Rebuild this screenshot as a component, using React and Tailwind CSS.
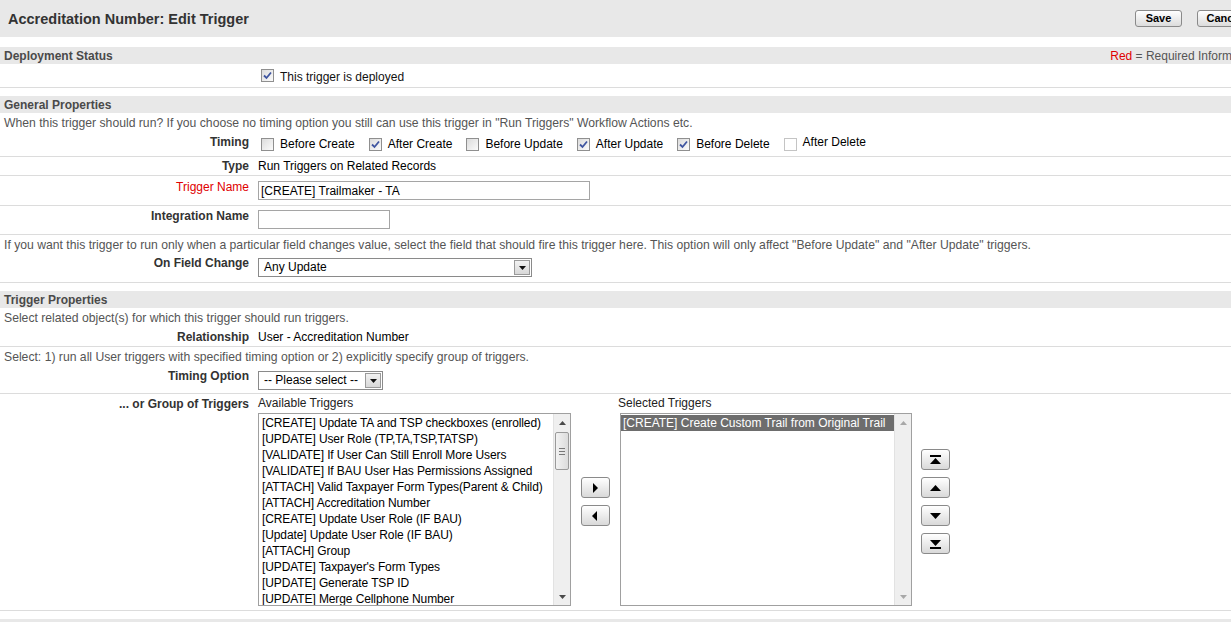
const available = [
  '[CREATE] Update TA and TSP checkboxes (enrolled)',
  '[UPDATE] User Role (TP,TA,TSP,TATSP)',
  '[VALIDATE] If User Can Still Enroll More Users',
  '[VALIDATE] If BAU User Has Permissions Assigned',
  '[ATTACH] Valid Taxpayer Form Types(Parent & Child)',
  '[ATTACH] Accreditation Number',
  '[CREATE] Update User Role (IF BAU)',
  '[Update] Update User Role (IF BAU)',
  '[ATTACH] Group',
  "[UPDATE] Taxpayer's Form Types",
  '[UPDATE] Generate TSP ID',
  '[UPDATE] Merge Cellphone Number',
]

const timings = [
  { label: 'Before Create', checked: false },
  { label: 'After Create', checked: true },
  { label: 'Before Update', checked: false },
  { label: 'After Update', checked: true },
  { label: 'Before Delete', checked: true },
  { label: 'After Delete', checked: false, light: true },
]

function Checkbox({ checked, light }) {
  return (
    <span
      className={`inline-flex h-[13px] w-[13px] shrink-0 items-center justify-center border ${
        light ? 'border-[#c4c4c4] bg-white' : 'border-[#8f8f8f] bg-gradient-to-br from-[#dcdcdc] to-[#fbfbfb]'
      }`}
    >
      {checked ? (
        <svg width="9" height="9" viewBox="0 0 9 9">
          <path d="M1 4.5 L3.5 7 L8 1.5" fill="none" stroke="#3f55a0" strokeWidth="1.8" />
        </svg>
      ) : null}
    </span>
  )
}

function SectionHeader({ children, right }) {
  return (
    <div className="flex h-[17px] items-center justify-between bg-[#e8e8e8] px-1 text-[12px]">
      <span className="font-bold text-[#4a4a4a]">{children}</span>
      {right}
    </div>
  )
}

function Label({ children, red, pt = 'pt-0' }) {
  return (
    <div
      className={`w-[258px] shrink-0 pr-[9px] text-right font-bold ${pt} ${red ? 'font-normal text-[#e00000]' : 'text-[#333]'}`}
    >
      {children}
    </div>
  )
}

function Row({ children, className = '', line = true }) {
  return (
    <div className={`flex ${line ? 'border-b border-[#dcdcdc]' : ''} ${className}`}>{children}</div>
  )
}

function Desc({ children, className = '' }) {
  return <div className={`whitespace-nowrap pl-1 text-[12.2px] text-[#555] ${className}`}>{children}</div>
}

function SelectBox({ value, width }) {
  return (
    <div className={`flex h-[19px] items-stretch border border-[#8a8a8a] bg-white ${width}`}>
      <span className="flex-1 truncate pl-[5px] leading-[17px] text-black">{value}</span>
      <span className="m-px flex w-[16px] items-center justify-center border border-[#9a9a9a] bg-gradient-to-b from-[#f2f2f2] to-[#d8d8d8]">
        <svg width="7" height="4" viewBox="0 0 7 4">
          <path d="M0 0 H7 L3.5 4 Z" fill="#111" />
        </svg>
      </span>
    </div>
  )
}

function ArrowBtn({ dir }) {
  const shapes = {
    right: <path d="M4 1 L9 6 L4 11 Z" fill="#000" />,
    left: <path d="M8 1 L3 6 L8 11 Z" fill="#000" />,
    top: (
      <>
        <rect x="1" y="1" width="11" height="2" fill="#000" />
        <path d="M1 10 L6.5 4 L12 10 Z" fill="#000" />
      </>
    ),
    up: <path d="M1 9 L6.5 3 L12 9 Z" fill="#000" />,
    down: <path d="M1 3 L6.5 9 L12 3 Z" fill="#000" />,
    bottom: (
      <>
        <path d="M1 2 L6.5 8 L12 2 Z" fill="#000" />
        <rect x="1" y="9" width="11" height="2" fill="#000" />
      </>
    ),
  }
  return (
    <button className="flex h-[21px] w-[29px] items-center justify-center rounded-[3px] border border-[#8a8a8a] bg-gradient-to-b from-white to-[#d9d9d9]">
      <svg width="13" height="12" viewBox="0 0 13 12">
        {shapes[dir]}
      </svg>
    </button>
  )
}

function Scrollbar({ active }) {
  const c = active ? '#4a4a4a' : '#a8a8a8'
  return (
    <div className="flex w-[17px] shrink-0 flex-col border-l border-[#e2e2e2] bg-[#efefef]">
      <div className="flex h-[17px] items-center justify-center">
        <svg width="7" height="4" viewBox="0 0 7 4">
          <path d="M0 4 L3.5 0 L7 4 Z" fill={c} />
        </svg>
      </div>
      <div className="flex-1 px-px">
        {active ? (
          <div className="mt-px flex h-[38px] flex-col items-center justify-center gap-[2px] rounded-[2px] border border-[#9a9a9a] bg-gradient-to-r from-[#f2f2f2] to-[#dcdcdc]">
            <span className="h-px w-[6px] bg-[#777]" />
            <span className="h-px w-[6px] bg-[#777]" />
            <span className="h-px w-[6px] bg-[#777]" />
          </div>
        ) : null}
      </div>
      <div className="flex h-[17px] items-center justify-center">
        <svg width="7" height="4" viewBox="0 0 7 4">
          <path d="M0 0 H7 L3.5 4 Z" fill={c} />
        </svg>
      </div>
    </div>
  )
}

export default function App() {
  return (
    <div className="h-[622px] w-[1231px] overflow-hidden bg-white font-['Liberation_Sans',Arial,sans-serif] text-[12px] leading-[14px] text-black">
      <div className="w-[1262px]">
        <header className="flex h-[37px] items-center justify-between bg-[#e8e8e8] pl-2 pr-[10px]">
          <h1 className="text-[14.5px] font-bold text-[#333]">Accreditation Number: Edit Trigger</h1>
          <div className="flex items-center gap-[15px] pb-px">
            <button className="h-[17px] w-[47px] rounded-[3px] border border-[#8a8a8a] bg-gradient-to-b from-white to-[#dcdcdc] text-[11px] font-bold leading-[15px] text-black">
              Save
            </button>
            <button className="h-[17px] w-[55px] rounded-[3px] border border-[#8a8a8a] bg-gradient-to-b from-white to-[#dcdcdc] text-[11px] font-bold leading-[15px] text-black">
              Cancel
            </button>
          </div>
        </header>

        <div className="mt-[10px]">
          <SectionHeader
            right={
              <span className="text-[#555]">
                <span className="text-[#e00000]">Red</span> = Required Information
              </span>
            }
          >
            Deployment Status
          </SectionHeader>
          <Row className="h-[24px] items-center">
            <div className="w-[261px] shrink-0" />
            <Checkbox checked />
            <span className="ml-[6px] mt-[3px] text-[#111]">This trigger is deployed</span>
          </Row>
        </div>

        <div className="mt-[8px]">
          <SectionHeader>General Properties</SectionHeader>
          <Desc className="h-[20px] pt-[3px]">
            When this trigger should run? If you choose no timing option you still can use this trigger in "Run Triggers" Workflow Actions etc.
          </Desc>
          <Row className="h-[24px] items-start pt-[2px]">
            <Label>Timing</Label>
            <div className="flex items-center pl-[3px] pt-[2px]">
              {timings.map((t) => (
                <div key={t.label} className="mr-[14px] flex items-center">
                  <Checkbox checked={t.checked} light={t.light} />
                  <span className={`ml-[6px] ${t.light ? '-mt-[4px]' : ''}`}>{t.label}</span>
                </div>
              ))}
            </div>
          </Row>
          <Row className="h-[19px] items-center">
            <Label>Type</Label>
            <span>Run Triggers on Related Records</span>
          </Row>
          <Row className="h-[30px] items-start">
            <Label red pt="pt-[4px]">Trigger Name</Label>
            <div className="mt-[5px] flex h-[19px] w-[332px] items-center border border-[#a5a5a5] pl-[2px]">
              [CREATE] Trailmaker - TA
            </div>
          </Row>
          <Row className="h-[29px] items-start">
            <Label pt="pt-[3px]">Integration Name</Label>
            <div className="mt-[4px] h-[19px] w-[132px] border border-[#a5a5a5]" />
          </Row>
          <Desc className="h-[19px] pt-[3px]">
            If you want this trigger to run only when a particular field changes value, select the field that should fire this trigger here. This option will only affect "Before Update" and "After Update" triggers.
          </Desc>
          <Row className="h-[29px] items-start">
            <Label pt="pt-[2px]">On Field Change</Label>
            <div className="mt-[4px]">
              <SelectBox value="Any Update" width="w-[274px]" />
            </div>
          </Row>
        </div>

        <div className="mt-[8px]">
          <SectionHeader>Trigger Properties</SectionHeader>
          <Desc className="h-[20px] pt-[3px]">Select related object(s) for which this trigger should run triggers.</Desc>
          <Row className="h-[19px] items-start pt-[2px]">
            <Label>Relationship</Label>
            <span>User - Accreditation Number</span>
          </Row>
          <Desc className="h-[20px] pt-[3px]">
            Select: 1) run all User triggers with specified timing option or 2) explicitly specify group of triggers.
          </Desc>
          <Row className="h-[27px] items-start">
            <Label pt="pt-[2px]">Timing Option</Label>
            <div className="mt-[4px]">
              <SelectBox value="-- Please select --" width="w-[125px]" />
            </div>
          </Row>
          <Row className="h-[217px] items-start pt-px">
            <Label pt="pt-[2px]">... or Group of Triggers</Label>
            <div className="flex flex-col">
              <span className="pt-[1px] text-[#222]">Available Triggers</span>
              <div className="mt-[3px] flex h-[193px] w-[313px] border border-[#a0a0a0]">
                <ul className="flex-1 overflow-hidden pl-[3px] pt-px tracking-[-0.1px]">
                  {available.map((a) => (
                    <li key={a} className="h-[16px] whitespace-nowrap leading-[16px]">
                      {a}
                    </li>
                  ))}
                </ul>
                <Scrollbar active />
              </div>
            </div>
            <div className="ml-[10px] mt-[82px] flex flex-col gap-[7px]">
              <ArrowBtn dir="right" />
              <ArrowBtn dir="left" />
            </div>
            <div className="ml-[8px] flex flex-col">
              <span className="pt-[1px] text-[#222]">Selected Triggers</span>
              <div className="ml-[2px] mt-[3px] flex h-[193px] w-[292px] border border-[#a0a0a0]">
                <ul className="flex-1 overflow-hidden pt-px">
                  <li className="h-[16px] whitespace-nowrap bg-[#6d6d6d] pl-[2px] leading-[16px] text-white">
                    [CREATE] Create Custom Trail from Original Trail
                  </li>
                </ul>
                <Scrollbar />
              </div>
            </div>
            <div className="ml-[9px] mt-[54px] flex flex-col gap-[7px]">
              <ArrowBtn dir="top" />
              <ArrowBtn dir="up" />
              <ArrowBtn dir="down" />
              <ArrowBtn dir="bottom" />
            </div>
          </Row>
        </div>

        <div className="mt-[8px] h-[20px] bg-[#e8e8e8]" />
      </div>
    </div>
  )
}
